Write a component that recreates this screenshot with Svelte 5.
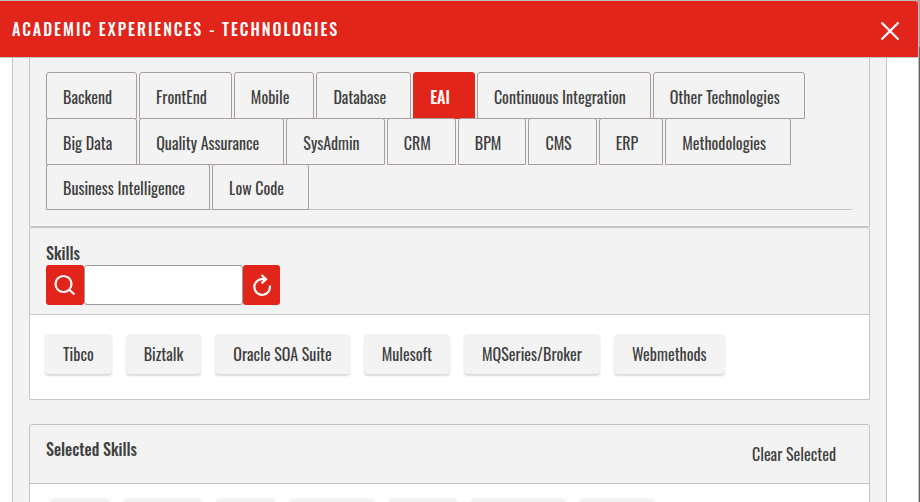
<script>
  const tabRows = [
    ['Backend', 'FrontEnd', 'Mobile', 'Database', 'EAI', 'Continuous Integration', 'Other Technologies'],
    ['Big Data', 'Quality Assurance', 'SysAdmin', 'CRM', 'BPM', 'CMS', 'ERP', 'Methodologies'],
    ['Business Intelligence', 'Low Code']
  ];
  const skills = ['Tibco', 'Biztalk', 'Oracle SOA Suite', 'Mulesoft', 'MQSeries/Broker', 'Webmethods'];
  const chosen = [60, 78, 59, 86, 68, 95, 75];

  let active = $state('EAI');
  let query = $state('');
</script>

<div class="page">
  <div class="modal" role="dialog" aria-labelledby="title">
    <header class="bar">
      <h1 id="title">ACADEMIC EXPERIENCES - TECHNOLOGIES</h1>
      <button class="close" aria-label="Close">
        <svg viewBox="0 0 20 20" width="20" height="20"><path d="M1.5 1.5 18.5 18.5M18.5 1.5 1.5 18.5" /></svg>
      </button>
    </header>
    <main class="sheet">
      <section class="panel first">
        <div class="tabs" role="tablist">
          {#each tabRows as row}
            <div class="row" role="presentation">
              {#each row as name}
                <button class="tab" class:active={active === name} role="tab" aria-selected={active === name} onclick={() => (active = name)}>{name}</button>
              {/each}
            </div>
          {/each}
        </div>
      </section>

      <section class="panel">
        <div class="head">
          <label for="skill">Skills</label>
          <div class="search">
            <button class="icon" aria-label="Search">
              <svg viewBox="0 0 22 22" width="22" height="22"><circle cx="9.5" cy="10" r="8" /><path d="M15.2 15.7 20.5 20.5" /></svg>
            </button>
            <input id="skill" type="text" bind:value={query} />
            <button class="icon reset" aria-label="Reset" onclick={() => (query = '')}>
              <svg viewBox="0 0 20 22" width="20" height="22"><path d="M17.8 11.5A7.8 7.8 0 1 1 10 5.2H14M9.5 1 14 5.2 9.5 9.4" /></svg>
            </button>
          </div>
        </div>
        <div class="chips">
          {#each skills as name}
            <button class="chip">{name}</button>
          {/each}
        </div>
      </section>

      <section class="panel selected">
        <div class="head split">
          <h2>Selected Skills</h2>
          <button class="clear">Clear Selected</button>
        </div>
        <div class="chips low">
          {#each chosen as width, i}
            <button class="chip" aria-label="Selected skill {i + 1}" style:width="{width}px"></button>
          {/each}
        </div>
      </section>
    </main>
  </div>
</div>

<style>
  :global(body) {
    margin: 0;
  }
  .page {
    box-sizing: border-box;
    height: 100vh;
    padding-right: 1px;
    overflow: hidden;
    background: linear-gradient(#a0a0a0 47px, #666 47px);
    color: #3f3f3f;
    font: 400 16px/24px Oswald, 'Liberation Sans Narrow', 'Liberation Sans', sans-serif;
  }
  .page * {
    box-sizing: border-box;
  }
  button,
  input {
    margin: 0;
    padding: 0;
    border: 0;
    font: inherit;
    color: inherit;
  }
  button {
    cursor: pointer;
    white-space: nowrap;
  }
  svg {
    display: block;
    fill: none;
    stroke: #fff;
    stroke-width: 2.2;
  }
  .modal {
    display: flex;
    flex-direction: column;
    height: 100%;
    border: 1px solid #bcbcbc;
    border-width: 1px 1px 0 0;
    border-radius: 0 4px 0 0;
    background: #fff;
    overflow: hidden;
  }
  .bar {
    display: flex;
    flex: none;
    align-items: center;
    justify-content: space-between;
    height: 57px;
    padding: 0 18px 0 12px;
    border-bottom: 1px solid #c5c5c5;
    background: #e1251b;
  }
  h1 {
    margin: 0;
    color: #fff;
    font-size: 16px;
    font-weight: 500;
    line-height: 24px;
    letter-spacing: 2px;
  }
  .close {
    padding-top: 4px;
    background: none;
  }
  .sheet {
    flex: 1;
    min-height: 0;
    margin: 0 31px 0 12px;
    padding: 0 16px;
    border: 1px solid #c5c5c5;
    border-width: 0 1px;
    background: #f3f3f3;
    overflow: hidden;
  }
  .panel {
    border: 1px solid #c5c5c5;
    border-radius: 3px 3px 0 0;
  }
  .first {
    padding: 14px 16px 16px;
    border-top: 0;
    border-radius: 0;
  }
  .tabs {
    border-bottom: 1px solid #c5c5c5;
    border-radius: 3px;
  }
  .row {
    display: flex;
    gap: 2px;
    margin-bottom: -1px;
  }
  .tab {
    height: 47px;
    padding: 2px 24px 0 16px;
    border: 1px solid #a89c9c;
    border-radius: 3px 3px 0 0;
    background: #f3f3f3;
    text-align: left;
  }
  .row:last-child .tab {
    height: 46px;
  }
  .tab.active {
    border-color: #e1251b;
    background: #e1251b;
    color: #fff;
    font-weight: 500;
  }
  .head {
    padding: 13px 16px 9px;
    border-bottom: 1px solid #c5c5c5;
  }
  label,
  h2 {
    display: block;
    margin: 0;
    font-size: 16px;
    font-weight: 500;
    line-height: 24px;
  }
  .search {
    display: flex;
  }
  .icon {
    display: grid;
    place-items: center;
    width: 38px;
    height: 40px;
    border-radius: 3px;
    background: #e1251b;
  }
  .reset {
    width: 37px;
  }
  .search input {
    width: 159px;
    height: 40px;
    padding: 0 8px;
    border: 1px solid #999;
    border-radius: 3px;
    background: #fff;
  }
  .chips {
    display: flex;
    gap: 14px;
    height: 84px;
    padding: 19px 15px;
    background: #fff;
  }
  .chip {
    height: 40px;
    padding: 0 18px;
    border-radius: 4px;
    background: #f3f3f3;
    box-shadow: 0 2px 2px rgb(0 0 0 / 15%);
  }
  .selected {
    margin-top: 24px;
  }
  .split {
    display: flex;
    align-items: flex-start;
    justify-content: space-between;
    height: 59px;
    padding: 12px 33px 12px 16px;
  }
  .clear {
    padding-top: 5px;
    background: none;
  }
  .low {
    padding: 14px 20px;
  }
</style>
